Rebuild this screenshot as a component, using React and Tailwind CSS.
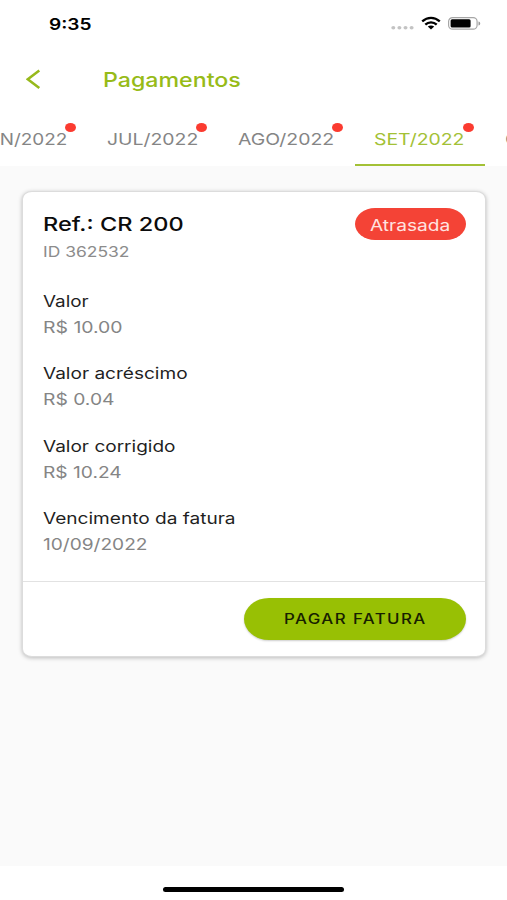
import { useLayoutEffect, useRef } from "react";

// Text that is stretched horizontally to fill the width of its box.
function Fit({ className = "", children }) {
  const ref = useRef(null);
  useLayoutEffect(() => {
    const el = ref.current;
    el.style.transform = `scaleX(${el.parentElement.clientWidth / el.offsetWidth})`;
  }, []);
  return (
    <span className={`block h-5 leading-5 ${className}`}>
      <span ref={ref} className="inline-block origin-left whitespace-nowrap align-top">
        {children}
      </span>
    </span>
  );
}

function StatusBar() {
  return (
    <div className="flex h-12 pt-[14px] pl-[49px] text-black">
      <Fit className="w-[43px] text-[16px] font-semibold">9:35</Fit>
      <div className="-mt-px ml-[299px] flex h-5">
        <svg width="92" height="20" viewBox="0 0 92 20">
          <g fill="#c3c3c3">
            <ellipse cx="2.3" cy="14.7" rx="2" ry="1.7" />
            <ellipse cx="8.4" cy="14.7" rx="2" ry="1.7" />
            <ellipse cx="14.5" cy="14.7" rx="2" ry="1.7" />
            <ellipse cx="20.6" cy="14.7" rx="2" ry="1.7" />
          </g>
          <g fill="none" stroke="#000" strokeWidth="2.3">
            <path d="M31.2 8.4C36.5 3.6 43.5 3.6 48.8 8.4" />
            <path d="M34.3 11.6C37.5 8.6 42.5 8.6 45.7 11.6" />
          </g>
          <path d="M36.8 13.6C38.6 12.1 41.4 12.1 43.2 13.6L40 16.4Z" />
          <rect x="57.6" y="4.6" width="28.5" height="11.6" rx="4" fill="none" stroke="#a6a6a6" strokeWidth="1.2" />
          <rect x="59.6" y="6.3" width="20" height="8.3" rx="1.5" />
          <path d="M87.5 8.5C89.8 9.2 89.8 11.8 87.5 12.5Z" fill="#999" />
        </svg>
      </div>
    </div>
  );
}

function Dot() {
  return <span className="absolute -top-[6px] -right-[9px] h-[9px] w-[11px] rounded-[50%] bg-[#fb3b30]" />;
}

function Tab({ className, textClass, label, dot = true, active = false }) {
  return (
    <div
      className={`h-[46px] shrink-0 border-b-2 pt-[9px] ${
        active ? "border-[#a3c136] text-[#a3c136]" : "border-transparent text-[#858585]"
      } ${className}`}
    >
      <div className={`relative ${textClass}`}>
        <Fit className={`text-[16px] ${textClass}`}>{label}</Fit>
        {dot && <Dot />}
      </div>
    </div>
  );
}

function Field({ label, labelClass, value, valueClass }) {
  return (
    <div className="h-[72.3px]">
      <Fit className={`text-[16px] text-[#1f1f1f] ${labelClass}`}>{label}</Fit>
      <Fit className={`mt-[6px] text-[16px] text-[#858585] ${valueClass}`}>{value}</Fit>
    </div>
  );
}

export default function App() {
  return (
    <div className="flex h-[900px] w-[507px] flex-col overflow-hidden bg-white font-['Inter','Liberation_Sans',sans-serif]">
      <StatusBar />

      <header className="flex h-[72px] pt-[21px] pl-[26px]">
        <svg width="16" height="22" viewBox="0 0 16 22" fill="none" stroke="#97b91b" strokeWidth="2.5">
          <path d="M13.3 1.4L1.800 10.200L13.300 19" />
        </svg>
        <Fit className="mt-px ml-[61px] w-[138px] text-[20px] font-[550] text-[#97bb18]">Pagamentos</Fit>
      </header>

      <nav className="flex h-[46px] overflow-hidden">
        <Tab className="-ml-[45px] w-[132px] pl-[20px]" textClass="w-[92px]" label="JUN/2022" />
        <Tab className="w-[131px] pl-[20px]" textClass="w-[91px]" label="JUL/2022" />
        <Tab className="w-[137px] pl-[20px]" textClass="w-[96px]" label="AGO/2022" />
        <Tab className="w-[130px] pl-[19px]" textClass="w-[91px]" label="SET/2022" active />
        <Tab className="w-[130px] pl-[20px]" textClass="w-[96px]" label="OUT/2022" dot={false} />
      </nav>

      <main className="h-[700px] bg-[#fafafa] pt-[25px] pl-[22px]">
        <section className="flex h-[466px] w-[464px] flex-col rounded-[10px/8px] border border-[#dcdcdc] bg-white shadow-[0_1px_4px_rgba(0,0,0,0.26)]">
          <div className="flex h-[389px] justify-between pt-[16px] pr-[19px] pl-[19.5px]">
            <div>
              <Fit className="mt-[7px] w-[140px] text-[19px] font-[550] text-[#0c0c0c]">Ref.: CR 200</Fit>
              <Fit className="mt-[7px] mb-[29px] w-[86px] text-[14px] text-[#8c8c8c]">ID 362532</Fit>
              <Field label="Valor" labelClass="w-[46px]" value="R$ 10.00" valueClass="w-[80px]" />
              <Field label="Valor acréscimo" labelClass="w-[144px]" value="R$ 0.04" valueClass="w-[71px]" />
              <Field label="Valor corrigido" labelClass="w-[132px]" value="R$ 10.24" valueClass="w-[79px]" />
              <Field label="Vencimento da fatura" labelClass="w-[193px]" value="10/09/2022" valueClass="w-[105px]" />
            </div>
            <div className="flex h-[32px] w-[111px] rounded-[20px/16px] bg-[#f44336] pt-[7px] pl-[15px]">
              <Fit className="w-[80px] text-[16px] text-[#ffe3e0]">Atrasada</Fit>
            </div>
          </div>
          <div className="flex flex-1 justify-end border-t border-[#e2e2e2] pt-[16px] pr-[19px]">
            <button className="flex h-[42px] w-[222px] justify-center rounded-[25px/21px] bg-[#98c004] pt-[11px] shadow-[0_1px_2px_rgba(0,0,0,0.2)]">
              <Fit className="w-[143px] text-left text-[14px] font-[550] tracking-[1.2px] text-[#172000]">PAGAR FATURA</Fit>
            </button>
          </div>
        </section>
      </main>

      <footer className="flex flex-1 justify-center pt-[21px]">
        <div className="h-[5px] w-[181px] rounded-full bg-black" />
      </footer>
    </div>
  );
}
